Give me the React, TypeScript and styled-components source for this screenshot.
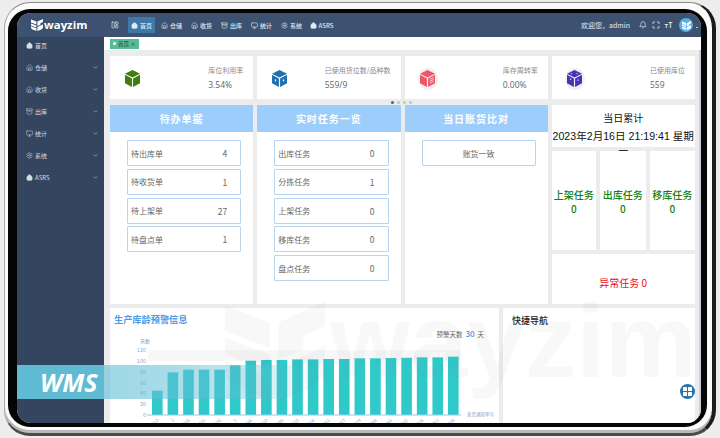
import React from "react";
import styled, { createGlobalStyle } from "styled-components";
import { Archive, Bell, ChevronDown, House, Maximize, Monitor, Settings, LayoutPanelLeft } from "lucide-react";

const Global = createGlobalStyle`
  html, body { margin: 0; padding: 0; overflow: hidden; background: #ededed; }
  body { font-family: "Noto Sans CJK SC", "Liberation Sans", sans-serif; }
`;

const Stage = styled.div`
  width: 720px;
  height: 438px;
  padding: 2px 4px;
  box-sizing: border-box;
`;
const OuterShell = styled.div`
  height: 434px;
  box-sizing: border-box;
  padding: 6px 5px 6px 3px;
  background: #fafafa;
  border-style: solid;
  border-width: 1px 4px 3px 1px;
  border-color: #8a8a8a #1c1c1c #4a4a4a #a8a8a8;
  border-radius: 26px;
  box-shadow: inset 0 -3px 0 #b9b9b9;
`;
const Bezel = styled.div`
  height: 100%;
  box-sizing: border-box;
  border-style: solid;
  border-width: 4px 6px 4px 9px;
  border-color: #050505;
  border-radius: 22px;
  background: #050505;
`;
const Screen = styled.div`
  position: relative;
  height: 100%;
  overflow: hidden;
  border-radius: 14px;
  display: flex;
  flex-direction: column;
  background: #ececec;
`;
const TopBar = styled.header`
  height: 24px;
  flex: none;
  background: #3d5270;
  display: flex;
  align-items: center;
  color: #e8edf3;
`;
const Brand = styled.div`
  width: 87px;
  flex: none;
  box-sizing: border-box;
  padding-left: 14px;
  display: flex;
  align-items: center;
  gap: 1px;
`;
const BrandName = styled.span`
  font: 700 11.4px "Open Sans", "Liberation Sans", sans-serif;
  color: #fff;
  line-height: 14px;
`;
const Collapse = styled.span`
  width: 24px;
  flex: none;
  display: flex;
  padding-left: 7px;
  box-sizing: border-box;
  color: #dfe5ec;
`;
const NavList = styled.nav`
  display: flex;
  gap: 3px;
  align-self: flex-start;
  margin-top: 4px;
`;
const NavItem = styled.a<{ $active?: boolean }>`
  width: 27px;
  height: 16px;
  flex: none;
  display: flex;
  align-items: center;
  justify-content: center;
  gap: 2px;
  font-size: 6px;
  font-weight: 500;
  background: ${(p) => (p.$active ? "#3f77a9" : "transparent")};
  color: #e3e9f0;
`;
const UserBox = styled.div`
  margin-left: auto;
  display: flex;
  align-items: center;
  padding-right: 3px;
`;
const Welcome = styled.span`
  font-size: 7px;
  margin-right: 6px;
  color: #e8edf3;
`;
const ToolIcon = styled.span`
  width: 13px;
  display: flex;
  justify-content: center;
  color: #eef2f6;
  font-size: 7px;
  line-height: 10px;
  font-weight: 500;
`;
const Avatar = styled.span`
  width: 14px;
  height: 14px;
  margin-left: 4px;
  border-radius: 50%;
  background: #5aaee6;
  display: flex;
  align-items: center;
  justify-content: center;
`;
const Caret = styled.span`
  width: 2px;
  height: 1px;
  margin: 4px 0 0 3px;
  background: #c6d0dc;
`;

const Body = styled.div`
  flex: 1;
  min-height: 0;
  display: flex;
`;
const Sidebar = styled.aside`
  width: 87px;
  flex: none;
  background: #34465f;
  display: flex;
  flex-direction: column;
  gap: 6px;
`;
const SideItem = styled.a`
  height: 16px;
  display: flex;
  align-items: center;
  padding: 0 6px 0 9px;
  gap: 2px;
  font-size: 6px;
  color: #d5dde6;
`;
const SideLabel = styled.span`
  flex: 1;
`;
const Content = styled.main`
  flex: 1;
  min-width: 0;
  display: flex;
  flex-direction: column;
`;
const TagBar = styled.div`
  height: 13px;
  flex: none;
  background: #fff;
  display: flex;
  align-items: center;
  padding-left: 6px;
`;
const Tag = styled.span`
  height: 10px;
  width: 29px;
  box-sizing: border-box;
  padding-left: 3px;
  display: flex;
  align-items: center;
  gap: 2px;
  background: #55bb99;
  color: #1f3a30;
  font-size: 5.5px;
`;
const TagDot = styled.i`
  width: 3px;
  height: 3px;
  border-radius: 50%;
  background: #fff;
`;
const Scroller = styled.div`
  flex: 1;
  min-height: 0;
  display: flex;
`;
const Page = styled.div`
  flex: 1;
  min-width: 0;
  overflow: hidden;
  padding: 6px 4px 0 6px;
  box-sizing: border-box;
  display: flex;
  flex-direction: column;
`;
const Track = styled.div`
  width: 2px;
  flex: none;
  background: #c9cedb;
`;
const CardRow = styled.section`
  height: 43px;
  flex: none;
  display: grid;
  grid-template-columns: repeat(4, 1fr);
  gap: 4px;
`;
const Card = styled.div`
  background: #fff;
  display: flex;
  align-items: center;
  justify-content: space-between;
  padding: 3px 10px 0 15px;
`;
const CubeHalo = styled.span<{ $halo?: boolean }>`
  width: 16px;
  height: 18px;
  display: flex;
  border-radius: 50%;
  box-shadow: ${(p) => (p.$halo ? "0 0 0 2px #f1eef2" : "none")};
  background: ${(p) => (p.$halo ? "#f1eef2" : "transparent")};
`;
const Stat = styled.div`
  display: flex;
  flex-direction: column;
  gap: 4px;
  margin-top: -4px;
`;
const StatLabel = styled.span`
  font-size: 7px;
  line-height: 10px;
  color: #8a8a8a;
`;
const StatValue = styled.span`
  font-size: 8.5px;
  line-height: 11px;
  color: #666;
  font-family: "Open Sans", "Noto Sans CJK SC", sans-serif;
`;
const Dots = styled.div`
  height: 6px;
  flex: none;
  display: flex;
  align-items: center;
  gap: 3px;
  padding-left: 281px;
`;
const Dot = styled.i<{ $on?: boolean }>`
  width: 3px;
  height: 3px;
  background: ${(p) => (p.$on ? "#1f6fc0" : "#c2c6cc")};
  border-radius: 50%;
`;
const PanelRow = styled.section`
  height: 199px;
  flex: none;
  display: grid;
  grid-template-columns: repeat(4, 1fr);
  gap: 4px;
`;
const Panel = styled.div`
  background: #fff;
`;
const PanelHead = styled.h3`
  margin: 0;
  height: 27px;
  background: #9dcdfb;
  color: #fff;
  font-size: 10px;
  font-weight: 700;
  letter-spacing: 1px;
  display: flex;
  align-items: center;
  justify-content: center;
`;
const TaskList = styled.ul`
  list-style: none;
  margin: 0;
  padding: 8px 12px 0 17px;
  display: flex;
  flex-direction: column;
  gap: 2.75px;
`;
const Task = styled.li<{ $center?: boolean }>`
  height: 26px;
  box-sizing: border-box;
  border: 1px solid #b7d4f0;
  border-radius: 1px;
  display: flex;
  align-items: center;
  justify-content: ${(p) => (p.$center ? "center" : "space-between")};
  padding: ${(p) => (p.$center ? "0" : "0 13px 0 3px")};
  font-size: 8px;
  color: #666;
`;
const TaskCount = styled.span`
  font-size: 8.5px;
  color: #666;
`;
const SummaryColumn = styled.div`
  display: grid;
  grid-template-columns: 44px 46px 45px;
  grid-template-rows: 42px 99px 50px;
  gap: 4px;
`;
const Today = styled.div`
  grid-column: 1 / -1;
  background: #fff;
  text-align: center;
  padding-top: 3px;
  color: #111;
  font-size: 10px;
  line-height: 20px;
`;
const TodayClock = styled.div`
  font-family: "Liberation Sans", "Noto Sans CJK SC", sans-serif;
  font-size: 10.6px;
  line-height: 18px;
  margin-top: -1px;
  margin-bottom: -2px;
`;
const Counter = styled.div`
  position: relative;
  background: #fff;
  display: flex;
  flex-direction: column;
  align-items: center;
  justify-content: center;
  color: #108010;
  font-size: 10px;
  line-height: 14px;
  font-weight: 500;
  white-space: nowrap;
  padding-top: 3px;
`;
const Alert = styled.div`
  grid-column: 1 / -1;
  background: #fff;
  display: flex;
  align-items: center;
  justify-content: center;
  color: #f01010;
  font-size: 10px;
  padding-top: 7px;
  box-sizing: border-box;
`;
const BottomRow = styled.section`
  margin-top: 4px;
  height: 130px;
  flex: none;
  display: grid;
  grid-template-columns: 389px 192px;
  gap: 4px;
`;
const ChartPanel = styled.div`
  background: #fff;
`;
const ChartTitle = styled.h4`
  margin: 0;
  height: 21px;
  padding: 0 4px;
  display: flex;
  align-items: center;
  font-size: 9.2px;
  font-weight: 700;
  color: #4c9be8;
`;
const WarnLine = styled.div`
  height: 9px;
  display: flex;
  align-items: center;
  justify-content: flex-end;
  gap: 3px;
  padding-right: 15px;
  font-size: 6.5px;
  color: #666;
`;
const WarnDays = styled.b`
  font-size: 8px;
  font-weight: 500;
  color: #3d95e6;
`;
const ChartSvg = styled.svg`
  display: block;
`;
const NavPanel = styled.div`
  background: #fff;
`;
const NavTitle = styled.h4`
  margin: 0;
  height: 24px;
  padding-left: 9px;
  display: flex;
  align-items: center;
  font-size: 9px;
  font-weight: 500;
  color: #222;
`;
const Watermark = styled.div`
  position: absolute;
  left: 208px;
  top: 270px;
  height: 118px;
  display: flex;
  align-items: flex-end;
  gap: 5px;
  pointer-events: none;
`;
const WatermarkText = styled.span`
  font: 700 103px/118px "Liberation Sans", sans-serif;
  color: rgba(120, 120, 130, 0.055);
`;
const Band = styled.div`
  position: absolute;
  left: 0;
  top: 352px;
  width: 284px;
  height: 34px;
  padding-left: 23px;
  box-sizing: border-box;
  display: flex;
  align-items: center;
  background: linear-gradient(
    90deg,
    rgba(98, 190, 214, 0.97) 0,
    rgba(98, 190, 214, 0.97) 30.6%,
    rgba(98, 190, 214, 0.62) 30.7%,
    rgba(98, 190, 214, 0.52) 60%,
    rgba(98, 190, 214, 0.3) 88%,
    rgba(98, 190, 214, 0) 100%
  );
`;
const BandText = styled.span`
  font: italic 700 25px/30px "Open Sans", "Liberation Sans", sans-serif;
  color: #fff;
`;
const FloatButton = styled.button`
  position: absolute;
  left: 663px;
  top: 371px;
  width: 15px;
  height: 15px;
  padding: 0;
  border: 0;
  border-radius: 50%;
  background: #2a72a8;
  display: flex;
  align-items: center;
  justify-content: center;
`;

const LogoMark = ({ size, fill }: { size: number; fill: string }) => (
  <svg width={size} height={size} viewBox="0 0 12 12" aria-hidden>
    <g fill={fill}>
      <polygon points="0,0.5 5.4,2.6 5.4,5.6 0,3.6" />
      <polygon points="0,4.4 5.4,6.4 5.4,8.4 0,6.4" />
      <polygon points="0,7.2 5.4,9.2 5.4,12 1,10.2 0,9" />
      <polygon points="6.4,2.6 12,0 12,3 9.4,4.2 9.4,5.8 6.4,7" />
      <polygon points="6.4,8 12,5.4 12,8.8 10.8,10.2 6.4,12" />
    </g>
  </svg>
);

const Cube = ({ color, detail }: { color: string; detail?: "dots" | "stripes" | "marks" }) => (
  <svg width="15" height="17" viewBox="0 0 16 18" aria-hidden>
    <polygon points="8,0 16,4 8,8 0,4" fill={color} />
    <polygon points="0,5 7.4,9 7.4,18 0,14" fill={color} />
    <polygon points="8.6,9 16,5 16,14 8.6,18" fill={color} />
    {detail === "dots" && (
      <g fill="#fff">
        <rect x="3" y="10" width="1.4" height="2" />
        <rect x="11.6" y="10" width="1.4" height="2" />
      </g>
    )}
    {detail === "stripes" && (
      <g stroke="#fff" strokeWidth="0.7">
        <line x1="10.5" y1="10" x2="14.5" y2="8" />
        <line x1="10.5" y1="12" x2="14.5" y2="10" />
        <line x1="10.5" y1="14" x2="14.5" y2="12" />
      </g>
    )}
    {detail === "marks" && (
      <g fill="#c8bff0">
        <rect x="3" y="9" width="1.5" height="1.5" />
        <rect x="11" y="10" width="1.5" height="1.5" />
        <rect x="4" y="3.4" width="1.5" height="1" />
        <rect x="10" y="3.4" width="1.5" height="1" />
      </g>
    )}
  </svg>
);

const navItems = [
  { label: "首页", Icon: House, solid: true },
  { label: "仓储", Icon: House },
  { label: "收货", Icon: House },
  { label: "出库", Icon: Archive },
  { label: "统计", Icon: Monitor },
  { label: "系统", Icon: Settings },
  { label: "ASRS", Icon: House, solid: true },
];

const stats = [
  { label: "库位利用率", value: "3.54%", color: "#3f7f0d" },
  { label: "已使用货位数/品种数", value: "559/9", color: "#1f6fb0", detail: "dots" as const },
  { label: "库存周转率", value: "0.00%", color: "#f0566a", detail: "stripes" as const, halo: true },
  { label: "已使用库位", value: "559", color: "#4a32b8", detail: "marks" as const, halo: true },
];

const pending = [["待出库单", "4"], ["待收货单", "1"], ["待上架单", "27"], ["待盘点单", "1"]];
const tasks = [["出库任务", "0"], ["分拣任务", "1"], ["上架任务", "0"], ["移库任务", "0"], ["盘点任务", "0"]];
const counters = ["上架任务", "出库任务", "移库任务"];

const bars = [45, 79, 84, 84, 84, 92, 100.5, 102, 102, 103, 103, 103.7, 103.7, 105, 105, 105.5, 106, 106.8, 106.8, 108];
const xLabels = ["2812", "1", "2156", "2431", "2556", "1", "1986", "2332", "2340", "2352", "2356", "2361", "2367", "2374", "2380", "2385", "2391", "2396", "2401", "2408"];

const Chart = () => {
  const base = 77;
  const left = 42;
  const step = 15.58;
  return (
    <ChartSvg width="389" height="100" viewBox="0 0 389 100">
      <text x="30" y="5" fontSize="5" fill="#7aa2cf">天数</text>
      {[0, 20, 40, 60, 80, 100, 120].map((t) => (
        <text key={t} x="36" y={base - t * 0.54 + 2} fontSize="5.5" fill="#86aedb" textAnchor="end">{t}</text>
      ))}
      <rect x="38" y={base - 120 * 0.54} width="313" height="11" fill="#f7f7f7" />
      {bars.map((v, i) => (
        <rect key={i} x={left + i * step} y={base - v * 0.54} width="10.6" height={v * 0.54} fill="#2fc9c9" />
      ))}
      <line x1="37" y1={base} x2="351" y2={base} stroke="#9cc6ee" strokeWidth="1" />
      {xLabels.map((l, i) => (
        <text
          key={i}
          x={left + i * step + 7}
          y={base + 6}
          fontSize="4.5"
          fill="#86aedb"
          textAnchor="end"
          transform={`rotate(-40 ${left + i * step + 7} ${base + 6})`}
        >
          {l}
        </text>
      ))}
      <text x="357" y={base + 1} fontSize="4.5" fill="#7aa2cf">发货通知单号</text>
    </ChartSvg>
  );
};

export default function App() {
  return (
    <Stage>
      <Global />
      <OuterShell>
        <Bezel>
          <Screen>
            <TopBar>
              <Brand>
                <LogoMark size={12} fill="#fff" />
                <BrandName>wayzim</BrandName>
              </Brand>
              <Collapse>
                <LayoutPanelLeft size={8} strokeWidth={2} />
              </Collapse>
              <NavList>
                {navItems.map(({ label, Icon, solid }, i) => (
                  <NavItem key={label} $active={i === 0}>
                    <Icon size={7} strokeWidth={2} fill={solid ? "currentColor" : "none"} />
                    {label}
                  </NavItem>
                ))}
              </NavList>
              <UserBox>
                <Welcome>欢迎您，admin</Welcome>
                <ToolIcon><Bell size={8} strokeWidth={2} /></ToolIcon>
                <ToolIcon><Maximize size={8} strokeWidth={2.4} /></ToolIcon>
                <ToolIcon>тT</ToolIcon>
                <Avatar><LogoMark size={9} fill="#fff" /></Avatar>
                <Caret />
              </UserBox>
            </TopBar>
            <Body>
              <Sidebar>
                {navItems.map(({ label, Icon, solid }) => (
                  <SideItem key={label}>
                    <Icon size={7} strokeWidth={1.6} fill={solid ? "currentColor" : "none"} />
                    <SideLabel>{label}</SideLabel>
                    {label !== "首页" && <ChevronDown size={5} strokeWidth={3.5} color="#6fe09a" />}
                  </SideItem>
                ))}
              </Sidebar>
              <Content>
                <TagBar>
                  <Tag><TagDot />首页 ×</Tag>
                </TagBar>
                <Scroller>
                  <Page>
                    <CardRow>
                      {stats.map((s) => (
                        <Card key={s.label}>
                          <CubeHalo $halo={s.halo}>
                            <Cube color={s.color} detail={s.detail} />
                          </CubeHalo>
                          <Stat>
                            <StatLabel>{s.label}</StatLabel>
                            <StatValue>{s.value}</StatValue>
                          </Stat>
                        </Card>
                      ))}
                    </CardRow>
                    <Dots>
                      <Dot $on /><Dot /><Dot /><Dot />
                    </Dots>
                    <PanelRow>
                      <Panel>
                        <PanelHead>待办单据</PanelHead>
                        <TaskList>
                          {pending.map(([n, c]) => (
                            <Task key={n}>{n}<TaskCount>{c}</TaskCount></Task>
                          ))}
                        </TaskList>
                      </Panel>
                      <Panel>
                        <PanelHead>实时任务一览</PanelHead>
                        <TaskList>
                          {tasks.map(([n, c]) => (
                            <Task key={n}>{n}<TaskCount>{c}</TaskCount></Task>
                          ))}
                        </TaskList>
                      </Panel>
                      <Panel>
                        <PanelHead>当日账货比对</PanelHead>
                        <TaskList>
                          <Task $center>账货一致</Task>
                        </TaskList>
                      </Panel>
                      <SummaryColumn>
                        <Today>
                          当日累计
                          <TodayClock>2023年2月16日 21:19:41 星期四</TodayClock>
                        </Today>
                        {counters.map((c) => (
                          <Counter key={c}>{c}<span>0</span></Counter>
                        ))}
                        <Alert>异常任务 0</Alert>
                      </SummaryColumn>
                    </PanelRow>
                    <BottomRow>
                      <ChartPanel>
                        <ChartTitle>生产库龄预警信息</ChartTitle>
                        <WarnLine>预警天数 <WarnDays>30</WarnDays> 天</WarnLine>
                        <Chart />
                      </ChartPanel>
                      <NavPanel>
                        <NavTitle>快捷导航</NavTitle>
                      </NavPanel>
                    </BottomRow>
                  </Page>
                  <Track />
                </Scroller>
              </Content>
            </Body>
            <Watermark>
              <LogoMark size={100} fill="rgba(120,120,130,0.05)" />
              <WatermarkText>wayzim</WatermarkText>
            </Watermark>
            <Band><BandText>WMS</BandText></Band>
            <FloatButton aria-label="快捷菜单">
              <svg width="9" height="9" viewBox="0 0 9 9" aria-hidden>
                <g fill="#fff">
                  <rect x="0" y="0" width="4" height="4" rx="0.6" />
                  <rect x="5" y="0" width="4" height="4" rx="0.6" />
                  <rect x="0" y="5" width="4" height="4" rx="0.6" />
                  <rect x="5" y="5" width="4" height="4" rx="0.6" />
                </g>
              </svg>
            </FloatButton>
          </Screen>
        </Bezel>
      </OuterShell>
    </Stage>
  );
}
